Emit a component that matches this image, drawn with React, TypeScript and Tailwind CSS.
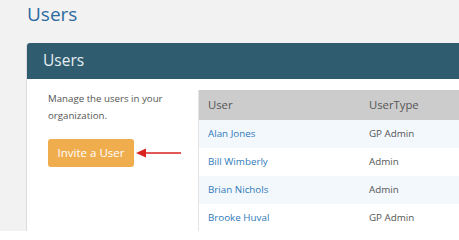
import React from 'react';

const users = [
  { name: 'Alan Jones', type: 'GP Admin' },
  { name: 'Bill Wimberly', type: 'Admin' },
  { name: 'Brian Nichols', type: 'Admin' },
  { name: 'Brooke Huval', type: 'GP Admin' },
];

function PointerArrow() {
  return (
    <svg width="46" height="12" viewBox="0 0 46 12" className="shrink-0">
      <line x1="8" y1="6" x2="45" y2="6" stroke="#d8231f" strokeWidth="1.6" />
      <path d="M0 6 L10 1.5 L10 10.5 Z" fill="#d8231f" />
    </svg>
  );
}

export default function App() {
  return (
    <div
      className="h-[231px] w-[459px] overflow-hidden bg-[#f2f2f2] pl-[26px]"
      style={{ fontFamily: '"Open Sans", "Liberation Sans", sans-serif' }}
    >
      <h1 className="h-[43px] pl-[1px] text-[19px] leading-[28px] text-[#2c6aa0]">
        Users
      </h1>

      <div className="w-[640px] rounded-t-[3px] border-l border-[#dcdcdc] bg-white">
        <div className="flex h-[36px] items-center rounded-t-[3px] bg-[#2f5c6f] pl-[16px] text-[15.5px] text-[#e6eff3]">
          Users
        </div>

        <div className="flex pt-[11px]">
          <div className="w-[171px] shrink-0 pl-[21px] pr-3">
            <p className="text-[9.7px] leading-[17px] text-[#555]">
              Manage the users in your organization.
            </p>
            <div className="mt-[15px] flex items-center gap-[2px]">
              <button className="h-[28px] w-[86px] rounded-[3px] bg-[#f0ad4e] text-[11.5px] text-white">
                Invite a User
              </button>
              <PointerArrow />
            </div>
          </div>

          <div className="flex-1 border-l border-[#e4e4e4]">
            <div className="flex h-[30px] items-center bg-[#cccccc] text-[11.3px] text-[#555]">
              <div className="w-[170px] pl-[9px]">User</div>
              <div>UserType</div>
            </div>
            {users.map((u, i) => (
              <div
                key={u.name}
                className={`flex h-[28px] items-center text-[9.8px] ${i % 2 === 0 ? 'bg-[#f3f8fc]' : 'bg-white'}`}
              >
                <div className="w-[170px] pl-[9px] text-[#2f7ab9]">{u.name}</div>
                <div className="text-[#555]">{u.type}</div>
              </div>
            ))}
          </div>
        </div>
      </div>
    </div>
  );
}
